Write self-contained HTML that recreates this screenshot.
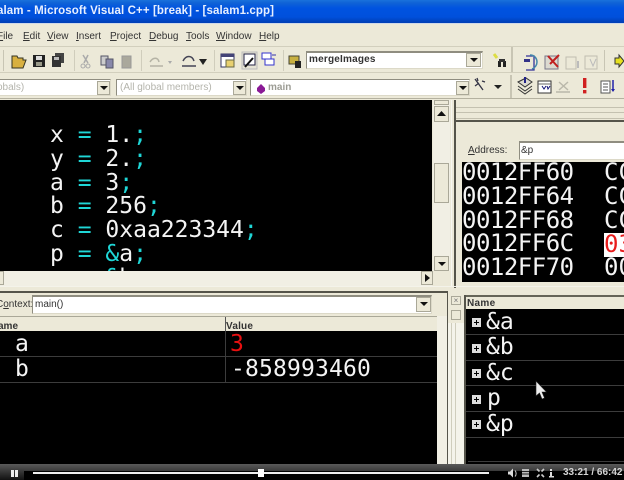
<!DOCTYPE html>
<html><head><meta charset="utf-8">
<style>
html,body{margin:0;padding:0;background:#000}
#r{position:relative;width:624px;height:480px;overflow:hidden;background:#ece9d8;font-family:"Liberation Sans",sans-serif;font-size:10px;color:#222}
#r div{position:absolute;white-space:pre}
.m{font-family:"DejaVu Sans Mono","Liberation Mono",monospace;color:#f4f4f4;font-size:23px}
.c{color:#1fd6d6}
.mn{font-size:10px;color:#333;top:31px}
.box{background:#fff;border:1px solid #8f8d80;border-right-color:#dcd9c8;border-bottom-color:#dcd9c8;box-sizing:border-box}
.btn{background:#ece9d8;border:1px solid #aaa898;box-sizing:border-box}
.tri{width:0;height:0;border-left:4px solid transparent;border-right:4px solid transparent;border-top:4px solid #111}
svg{position:absolute;overflow:visible}
</style></head><body><div id="r">
<!-- title -->
<div style="left:0;top:0;width:624px;height:23px;background:linear-gradient(#1a72dc 0,#0f62d6 3px,#0053e0 8px,#0050dc 17px,#0040b8 22px)"></div>
<div style="left:-3px;top:5px;font-size:11.5px;font-weight:bold;color:#e8f0ff;letter-spacing:.1px">alam - Microsoft Visual C++ [break] - [salam1.cpp]</div>
<div style="left:0;top:23px;width:624px;height:1px;background:#cfd8e8"></div>
<!-- menu -->
<div class="mn" style="left:-3px"><u>F</u>ile</div>
<div class="mn" style="left:23px"><u>E</u>dit</div>
<div class="mn" style="left:47px"><u>V</u>iew</div>
<div class="mn" style="left:76px"><u>I</u>nsert</div>
<div class="mn" style="left:110px"><u>P</u>roject</div>
<div class="mn" style="left:149px"><u>D</u>ebug</div>
<div class="mn" style="left:186px"><u>T</u>ools</div>
<div class="mn" style="left:216px"><u>W</u>indow</div>
<div class="mn" style="left:259px"><u>H</u>elp</div>
<div style="left:0;top:46px;width:624px;height:1px;background:#d2cfbd"></div>
<div style="left:0;top:72px;width:624px;height:1px;background:#d2cfbd"></div>
<!-- toolbar1 separators -->
<div style="left:3px;top:50px;width:1px;height:21px;background:#c8c5b4"></div>
<div style="left:74px;top:50px;width:1px;height:21px;background:#d0cdbc"></div>
<div style="left:141px;top:50px;width:1px;height:21px;background:#d0cdbc"></div>
<div style="left:214px;top:50px;width:1px;height:21px;background:#d0cdbc"></div>
<div style="left:283px;top:50px;width:1px;height:21px;background:#d0cdbc"></div>
<div style="left:511px;top:47px;width:2px;height:25px;background:#c8c5b4"></div>
<div style="left:604px;top:50px;width:1px;height:21px;background:#c8c5b4"></div>
<!-- toolbar1 icons -->
<svg style="left:0;top:47px" width="624" height="26">
<path d="M12 9h5l1 2h5v2h3l-3 8H12z" fill="#d8b040" stroke="#332" stroke-width="1"/>
<rect x="33" y="8" width="12" height="12" fill="#222"/><rect x="36" y="9" width="6" height="4" fill="#ddd"/><rect x="36" y="15" width="6" height="4" fill="#998"/>
<rect x="55" y="6" width="9" height="10" fill="#444"/><rect x="52" y="9" width="9" height="11" fill="#333"/><rect x="54" y="10" width="5" height="3" fill="#bbb"/>
<path d="M83 8l5 8M88 8l-4 8" stroke="#aaa" stroke-width="1.5" fill="none"/><circle cx="83" cy="19" r="2" fill="none" stroke="#aaa"/><circle cx="88" cy="19" r="2" fill="none" stroke="#aaa"/>
<rect x="101" y="9" width="7" height="9" fill="#ccc" stroke="#556"/><rect x="106" y="12" width="7" height="9" fill="#88a" stroke="#556"/>
<rect x="122" y="9" width="9" height="12" fill="#aaa89c" stroke="#999"/>
<path d="M150 15c3-5 8-5 9 0M150 19h13" stroke="#b5b3a5" stroke-width="1.5" fill="none"/><path d="M168 14l2 3 2-3z" fill="#aaa"/>
<path d="M183 14c3-6 9-6 11 0M182 19h14" stroke="#445" stroke-width="1.5" fill="none"/><path d="M199 12l4 6 4-6z" fill="#222"/>
<rect x="221" y="7" width="13" height="13" fill="#fff" stroke="#336"/><rect x="221" y="7" width="13" height="3" fill="#447"/><rect x="226" y="13" width="8" height="7" fill="#e8d070" stroke="#664"/>
<rect x="242" y="5" width="15" height="17" fill="#e6e3d4" stroke="#bbb"/><rect x="244" y="7" width="11" height="11" fill="#fff" stroke="#224"/><path d="M245 20l8-9" stroke="#111" stroke-width="2"/>
<rect x="262" y="6" width="9" height="6" fill="#fff" stroke="#33c"/><rect x="265" y="12" width="9" height="6" fill="#fff" stroke="#33c"/><path d="M272 8h4" stroke="#33a"/>
<rect x="289" y="9" width="10" height="8" fill="#c8b040" stroke="#443"/><rect x="295" y="14" width="6" height="7" fill="#222"/>
<path d="M494 7l3 4" stroke="#dd4" stroke-width="3"/><rect x="498" y="14" width="3" height="6" fill="#222"/><rect x="503" y="14" width="3" height="6" fill="#222"/><rect x="499" y="12" width="6" height="3" fill="#333"/>
<path d="M526 9h8v14h-8" fill="none" stroke="#339" stroke-width="1.3"/><path d="M530 8c5 0 7 4 7 7s-2 6-5 7" fill="none" stroke="#48a" stroke-width="1.5"/><rect x="524" y="12" width="6" height="3" fill="#338"/>
<rect x="545" y="9" width="13" height="13" fill="#dcdad0" stroke="#778"/><path d="M548 9l10 11M559 8l-9 9" stroke="#c02020" stroke-width="2"/>
<rect x="566" y="10" width="10" height="12" fill="none" stroke="#c0bdb0"/><path d="M578 14v7" stroke="#bbb" stroke-width="2"/>
<rect x="585" y="9" width="12" height="13" fill="none" stroke="#c0bdb0"/><path d="M590 12l3 7 3-7" stroke="#bbb" fill="none"/>
<path d="M615 11h4v-3l5 6-5 6v-3h-4z" fill="#e6e020" stroke="#333"/>
</svg>
<!-- merge box -->
<div class="box" style="left:306px;top:51px;width:177px;height:18px;border-top:2px solid #8f8d80"></div>
<div style="left:309px;top:54px;font-size:10px;font-weight:bold;color:#333;letter-spacing:.2px">mergeImages</div>
<div class="btn" style="left:466px;top:53px;width:15px;height:14px"></div>
<div class="tri" style="left:470px;top:58px"></div>
<!-- toolbar2 -->
<div class="box" style="left:-2px;top:79px;width:113px;height:17px"></div>
<div style="left:-3px;top:82px;font-size:10px;color:#b4b4ac">obals)</div>
<div class="btn" style="left:97px;top:81px;width:13px;height:14px"></div><div class="tri" style="left:100px;top:86px"></div>
<div class="box" style="left:116px;top:79px;width:131px;height:17px"></div>
<div style="left:120px;top:82px;font-size:10px;color:#b4b4ac">(All global members)</div>
<div class="btn" style="left:233px;top:81px;width:13px;height:14px"></div><div class="tri" style="left:236px;top:86px"></div>
<div class="box" style="left:250px;top:79px;width:220px;height:17px"></div>
<svg style="left:256px;top:84px" width="10" height="10"><path d="M5 0l4 4v3l-4 3-4-3V4z" fill="#8a1a96"/></svg>
<div style="left:268px;top:82px;font-size:10px;font-weight:bold;color:#9c9c94">main</div>
<div class="btn" style="left:456px;top:81px;width:13px;height:14px"></div><div class="tri" style="left:459px;top:86px"></div>
<div style="left:510px;top:75px;width:2px;height:24px;background:#c8c5b4"></div>
<svg style="left:0;top:73px" width="624" height="26">
<path d="M475 6l8 11M475 13l4-3M477 5l1 3M485 9l-3-1" stroke="#334" stroke-width="1.3" fill="none"/><path d="M494 12h8l-4 4z" fill="#222"/>
<path d="M518 9l8-4 6 4-7 5z" fill="#dcdad0" stroke="#333"/><path d="M518 13l7 5 7-5M518 16l7 5 7-5" stroke="#333" fill="none"/><path d="M525 4v6" stroke="#228" stroke-width="2"/>
<rect x="538" y="8" width="13" height="12" fill="#fff" stroke="#333"/><path d="M538 11h13" stroke="#666"/><path d="M542 13l2 3 2-3M547 13l1 3 2-3" stroke="#117" fill="none"/>
<path d="M559 9l9 8M568 9l-9 8M556 19h14" stroke="#bab8aa" stroke-width="1.5" fill="none"/>
<rect x="583" y="5" width="3.4" height="10" fill="#d02020"/><rect x="583" y="17" width="3.4" height="3.4" fill="#d02020"/>
<rect x="601" y="8" width="9" height="12" fill="#fff" stroke="#555"/><path d="M603 11h5M603 14h5M603 17h5" stroke="#555"/><path d="M613 7v11" stroke="#22a" stroke-width="1.5"/><path d="M611 16l2 3 2-3z" fill="#22a"/>
</svg>
<div style="left:0;top:98px;width:624px;height:1px;background:#b4b1a0"></div>
<!-- editor -->
<div style="left:0;top:100px;width:432px;height:171px;background:#000;overflow:hidden">
 <div class="m" style="left:50px;top:24px;line-height:23.8px">x <span class="c">=</span> 1.<span class="c">;</span>
y <span class="c">=</span> 2.<span class="c">;</span>
a <span class="c">=</span> 3<span class="c">;</span>
b <span class="c">=</span> 256<span class="c">;</span>
c <span class="c">=</span> 0xaa223344<span class="c">;</span>
p <span class="c">=</span> <span class="c">&amp;</span>a<span class="c">;</span>
    <span class="c">&amp;</span>b</div>
</div>
<div style="left:0;top:271px;width:432px;height:15px;background:#f1efe4"></div>
<div class="btn" style="left:-6px;top:271px;width:10px;height:14px"></div>
<div class="btn" style="left:421px;top:271px;width:12px;height:14px"></div>
<svg style="left:425px;top:274px" width="6" height="8"><path d="M0 0l5 4-5 4z" fill="#111"/></svg>
<!-- v scrollbar -->
<div style="left:433px;top:100px;width:17px;height:171px;background:#f1efe4"></div>
<div class="btn" style="left:434px;top:100px;width:15px;height:5px"></div>
<div class="btn" style="left:434px;top:106px;width:15px;height:16px"></div>
<svg style="left:437px;top:111px" width="9" height="5"><path d="M4.5 0l4.5 5H0z" fill="#111"/></svg>
<div class="btn" style="left:434px;top:163px;width:15px;height:40px"></div>
<div class="btn" style="left:434px;top:256px;width:15px;height:15px"></div>
<div class="tri" style="left:438px;top:262px"></div>
<div style="left:451px;top:100px;width:1px;height:186px;background:#f8f7f0"></div>
<!-- right top panel -->
<div style="left:454px;top:100px;width:2px;height:188px;background:#55544a"></div>
<div style="left:456px;top:107px;width:168px;height:1px;background:#c4c1b0"></div>
<div style="left:456px;top:112px;width:168px;height:1px;background:#c4c1b0"></div>
<div style="left:456px;top:118px;width:168px;height:1px;background:#c4c1b0"></div>
<div style="left:456px;top:120px;width:168px;height:2px;background:#55544a"></div>
<div style="left:468px;top:145px;font-size:10px;color:#333"><u>A</u>ddress:</div>
<div class="box" style="left:519px;top:141px;width:110px;height:19px;border-top:2px solid #8f8d80"></div>
<div style="left:521px;top:145px;font-size:10px;color:#333">&amp;p</div>
<div style="left:462px;top:162px;width:162px;height:120px;background:#000;overflow:hidden">
 <div class="m" style="left:0;top:-1px;font-size:24px;line-height:23.8px;letter-spacing:-.5px">0012FF60
0012FF64
0012FF68
0012FF6C
0012FF70</div>
 <div class="m" style="left:142px;top:-1px;font-size:24px;line-height:23.8px">CC
CC
CC

00</div>
 <div style="left:142px;top:71px;width:30px;height:24px;background:#fff"></div>
 <div class="m" style="left:142px;top:70px;font-size:24px;line-height:24px;color:#e81c1c">03</div>
</div>
<div style="left:456px;top:282px;width:168px;height:4px;background:#ece9d8"></div>
<div style="left:0;top:286px;width:624px;height:1px;background:#f4f3ea"></div>
<div style="left:0;top:291px;width:448px;height:2px;background:#55544a"></div>
<!-- context -->
<div style="left:-4px;top:299px;font-size:10px;color:#333">C<u>o</u>ntext:</div>
<div class="box" style="left:32px;top:295px;width:400px;height:19px;border-top:2px solid #8f8d80"></div>
<div style="left:35px;top:299px;font-size:10px;color:#333">main()</div>
<div class="btn" style="left:416px;top:297px;width:15px;height:15px"></div><div class="tri" style="left:420px;top:302px"></div>
<!-- watch left -->
<div style="left:0;top:316px;width:437px;height:1px;background:#aaa898"></div>
<div style="left:-2px;top:321px;font-size:10px;font-weight:bold;color:#333">ame</div>
<div style="left:226px;top:321px;font-size:10px;font-weight:bold;color:#333;letter-spacing:.2px">Value</div>
<div style="left:225px;top:317px;width:1px;height:14px;background:#555"></div>
<div style="left:0;top:331px;width:437px;height:133px;background:#000"></div>
<div style="left:0;top:356px;width:437px;height:1px;background:#3c3c3c"></div>
<div style="left:0;top:382px;width:437px;height:1px;background:#3c3c3c"></div>
<div style="left:225px;top:331px;width:1px;height:52px;background:#3c3c3c"></div>
<div class="m" style="left:15px;top:331px">a</div>
<div class="m" style="left:15px;top:356px">b</div>
<div class="m" style="left:230px;top:331px;color:#e81010">3</div>
<div class="m" style="left:231px;top:356px;letter-spacing:.15px">-858993460</div>
<!-- middle strip -->
<div style="left:437px;top:316px;width:11px;height:148px;background:#f1efe4"></div>
<div style="left:448px;top:323px;width:16px;height:141px;background:linear-gradient(90deg,#f4f3ea 0 3px,#cfcdbc 3px 4px,#f4f3ea 4px 7px,#cfcdbc 7px 8px,#f4f3ea 8px 16px)"></div>
<div style="left:447px;top:291px;width:1px;height:173px;background:#55544a"></div>
<div class="btn" style="left:451px;top:296px;width:10px;height:9px;color:#777;font-size:8px;line-height:7px;text-align:center">×</div>
<div class="btn" style="left:451px;top:310px;width:10px;height:10px"></div>
<!-- watch right -->
<div style="left:464px;top:295px;width:160px;height:2px;background:#666558"></div>
<div style="left:467px;top:298px;font-size:10px;font-weight:bold;color:#333;letter-spacing:.3px">Name</div>
<div style="left:464px;top:309px;width:160px;height:155px;background:#000;overflow:hidden"></div>
<div style="left:464px;top:295px;width:2px;height:169px;background:#55544a"></div>
<div style="left:466px;top:334px;width:158px;height:1px;background:#3c3c3c"></div>
<div style="left:466px;top:360px;width:158px;height:1px;background:#3c3c3c"></div>
<div style="left:466px;top:385px;width:158px;height:1px;background:#3c3c3c"></div>
<div style="left:466px;top:411px;width:158px;height:1px;background:#3c3c3c"></div>
<div style="left:466px;top:437px;width:158px;height:1px;background:#3c3c3c"></div>
<div style="left:468px;top:461px;width:156px;height:1px;background:#3c3c3c"></div>
<svg style="left:472px;top:318px" width="10" height="116">
<g fill="#ddd"><rect width="9" height="9" y="0"/><path d="M2 4.500h5M4.500 2v5" stroke="#000"/></g>
<g fill="#ddd"><rect width="9" height="9" y="26"/><path d="M2 30.500h5M4.500 28v5" stroke="#000"/></g>
<g fill="#ddd"><rect width="9" height="9" y="51"/><path d="M2 55.500h5M4.500 53v5" stroke="#000"/></g>
<g fill="#ddd"><rect width="9" height="9" y="77"/><path d="M2 81.500h5M4.500 79v5" stroke="#000"/></g>
<g fill="#ddd"><rect width="9" height="9" y="102"/><path d="M2 106.500h5M4.500 104v5" stroke="#000"/></g>
</svg>
<div class="m" style="left:486px;top:309px">&amp;a</div>
<div class="m" style="left:486px;top:334px">&amp;b</div>
<div class="m" style="left:486px;top:360px">&amp;c</div>
<div class="m" style="left:487px;top:385px">p</div>
<div class="m" style="left:486px;top:411px">&amp;p</div>
<!-- cursor -->
<svg style="left:535px;top:381px" width="13" height="20"><path d="M1 0v15l3.500-3 2.500 6 2.500-1-2.500-6h4.500z" fill="#eee" stroke="#222" stroke-width=".6"/></svg>
<!-- player -->
<div style="left:0;top:464px;width:624px;height:16px;background:#000"></div>
<div style="left:0;top:464px;width:624px;height:7px;background:linear-gradient(#5a5a5a,#3a3a3a)"></div>
<div style="left:0;top:465px;width:24px;height:15px;background:linear-gradient(#555,#111)"></div>
<div style="left:11px;top:470px;width:3px;height:7px;background:#eee"></div>
<div style="left:15px;top:470px;width:3px;height:7px;background:#eee"></div>
<div style="left:33px;top:472px;width:456px;height:2px;background:#eee"></div>
<div style="left:258px;top:469px;width:6px;height:8px;background:#fff"></div>
<svg style="left:508px;top:468px" width="60" height="11">
<path d="M0 3.500h2l3-3v9l-3-3H0z" fill="#ddd"/><path d="M7 2.500c1.500 1.500 1.500 4.500 0 6" stroke="#ccc" fill="none"/>
<rect x="14" y="1" width="7" height="8" fill="#bbb"/><path d="M14 3.500h7M14 6h7" stroke="#222"/>
<path d="M29 1l2.500 2.500M36 1l-2.500 2.500M29 9l2.500-2.500M36 9l-2.500-2.500" stroke="#ccc" stroke-width="1.600"/>
<rect x="42" y="1" width="2" height="2" fill="#ddd"/><rect x="42" y="4" width="2" height="5" fill="#ddd"/><rect x="41" y="8" width="5" height="1.500" fill="#ddd"/>
</svg>
<div style="left:563px;top:467px;font-size:10px;font-weight:bold;color:#d4d4d4">33:21 / 66:42</div>
</div></body></html>
